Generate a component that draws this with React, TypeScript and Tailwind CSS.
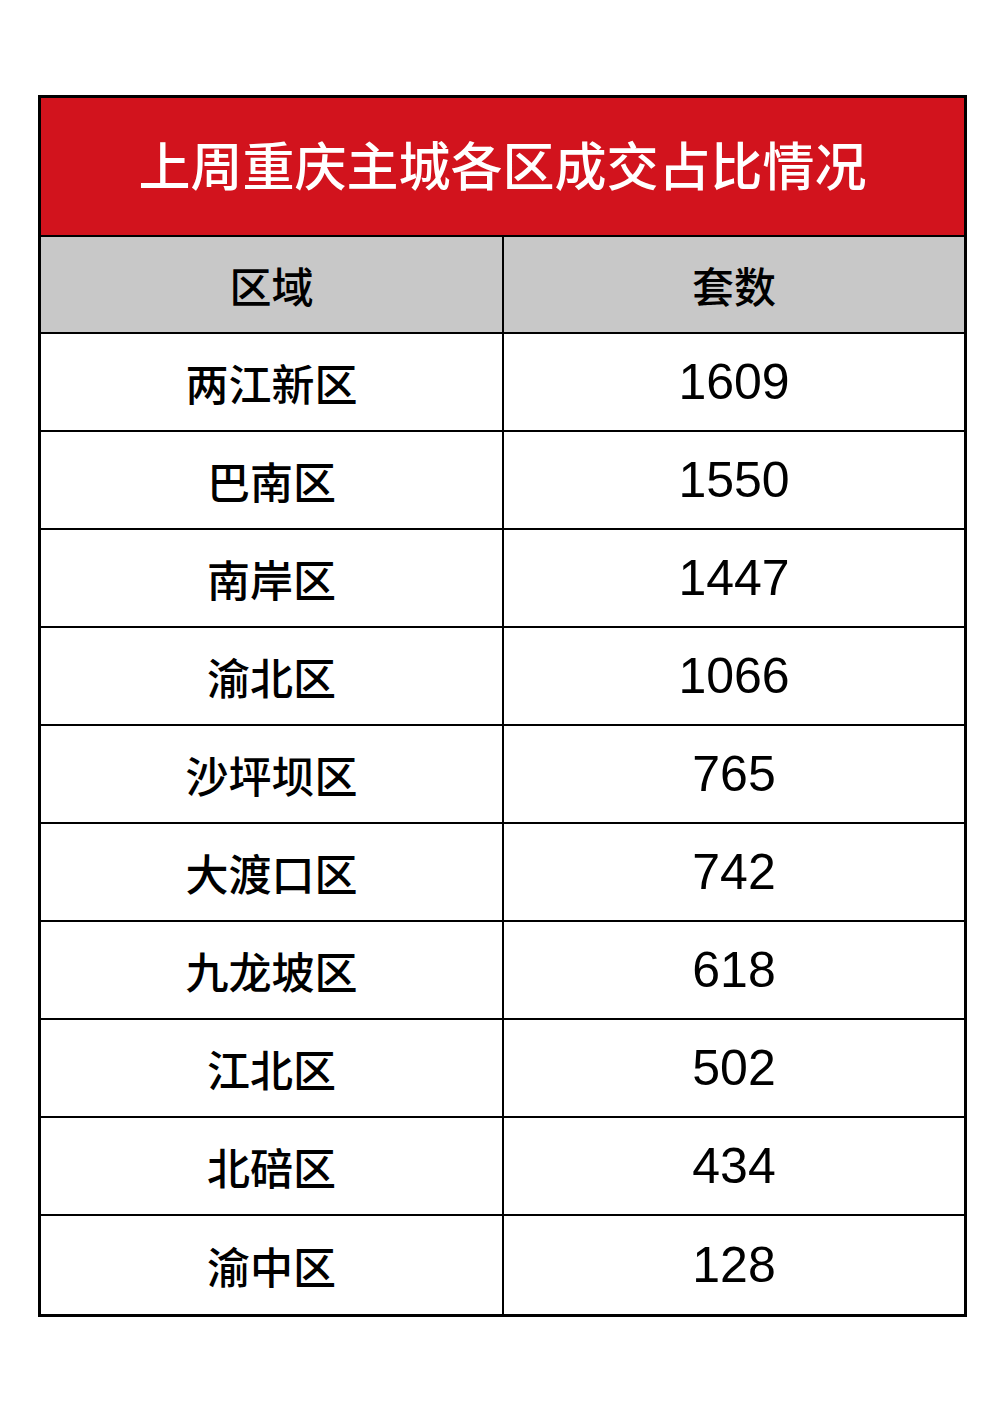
const rows: [string, string][] = [
  ["两江新区", "1609"],
  ["巴南区", "1550"],
  ["南岸区", "1447"],
  ["渝北区", "1066"],
  ["沙坪坝区", "765"],
  ["大渡口区", "742"],
  ["九龙坡区", "618"],
  ["江北区", "502"],
  ["北碚区", "434"],
  ["渝中区", "128"],
];

const cjk = "font-['Noto_Sans_CJK_SC','Noto_Sans',sans-serif]";

export default function App() {
  return (
    <div className="w-[1000px] h-[1413px] bg-white pt-[95px] pl-[38px]">
      <div className="w-[929px] border-[3px] border-black">
        {/* Title */}
        <div
          className={`h-[139px] pb-[5px] border-b-2 border-black bg-[#d2131d] flex items-center justify-center text-white text-[52px] font-medium leading-none ${cjk}`}
        >
          上周重庆主城各区成交占比情况
        </div>

        {/* Header */}
        <div className={`flex h-[97px] border-b-2 border-black bg-[#c8c8c8] text-[42px] font-medium text-black ${cjk}`}>
          <div className="w-[463px] border-r-2 border-black flex items-center justify-center">区域</div>
          <div className="flex-1 flex items-center justify-center">套数</div>
        </div>

        {/* Rows */}
        {rows.map(([area, count], i) => (
          <div
            key={area}
            className={`flex h-[98px] ${i < rows.length - 1 ? "border-b-2 border-black" : ""}`}
          >
            <div
              className={`w-[463px] border-r-2 border-black flex items-center justify-center text-[43px] font-medium text-black ${cjk}`}
            >
              {area}
            </div>
            <div className="flex-1 flex items-center justify-center text-[50px] text-black font-['Liberation_Sans',Arial,sans-serif]">
              {count}
            </div>
          </div>
        ))}
      </div>
    </div>
  );
}
